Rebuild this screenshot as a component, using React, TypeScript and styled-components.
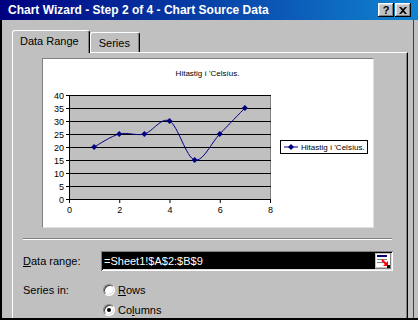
import styled, { createGlobalStyle } from "styled-components";

const GlobalStyle = createGlobalStyle`
  html, body {
    margin: 0;
    padding: 0;
    background: #c0c0c0;
  }
  body {
    font-family: "Liberation Sans", Arial, sans-serif;
    font-size: 11px;
    color: #000;
  }
`;

const Window = styled.div`
  width: 418px;
  height: 320px;
  box-sizing: border-box;
  display: flex;
  flex-direction: column;
  overflow: hidden;
  background: #c0c0c0;
  border-bottom: 2px solid #000;
`;

const TitleBar = styled.div`
  height: 20px;
  flex: none;
  display: flex;
  align-items: center;
  justify-content: space-between;
  padding: 0 7px 0 8px;
  background: linear-gradient(to right, #000080, #1084d0);
  color: #fff;
  font-weight: bold;
  font-size: 12px;
`;

const TitleButtons = styled.div`
  display: flex;
  gap: 1px;
`;

const TitleButton = styled.div`
  width: 16px;
  height: 14px;
  box-sizing: border-box;
  display: flex;
  align-items: center;
  justify-content: center;
  background: #c0c0c0;
  color: #000;
  font-size: 11px;
  font-weight: bold;
  box-shadow: inset -1px -1px #000, inset 1px 1px #fff, inset -2px -2px #808080,
    inset 2px 2px #dfdfdf;
`;

const Body = styled.div`
  flex: 1;
  min-height: 0;
  width: 414px;
  box-sizing: border-box;
  overflow: hidden;
  border-left: 2px solid #000;
  border-right: 1px solid #404040;
  padding: 10px 5px 0 10px;
`;

const TabRow = styled.div`
  display: flex;
  align-items: flex-end;
  height: 22px;
  position: relative;
  z-index: 1;
`;

const Tab = styled.div<{ $active?: boolean }>`
  box-sizing: border-box;
  height: ${({ $active }) => ($active ? 23 : 20)}px;
  margin-bottom: ${({ $active }) => ($active ? -1 : 0)}px;
  padding: ${({ $active }) => ($active ? "0 10px 2px 7px" : "0 9px 0 8px")};
  display: flex;
  align-items: center;
  background: #c0c0c0;
  border-top: 1px solid #fff;
  border-left: 1px solid #fff;
  border-right: 1px solid #000;
  border-radius: 3px 3px 0 0;
  box-shadow: inset -1px 0 #808080;
`;

const Panel = styled.div`
  box-sizing: border-box;
  width: 396px;
  height: 300px;
  border-top: 1px solid #fff;
  border-left: 1px solid #fff;
  border-right: 1px solid #000;
  box-shadow: inset -1px 0 #808080;
  padding: 5px 0 0 10px;
`;

const ChartFrame = styled.div`
  width: 332px;
  height: 170px;
  box-sizing: border-box;
  margin-left: 19px;
  background: #fff;
  border: 1px solid;
  border-color: #808080 #dfdfdf #dfdfdf #808080;
  svg {
    display: block;
  }
`;

const Separator = styled.div`
  width: 369px;
  margin-top: 10px;
  border-top: 1px solid #808080;
  border-bottom: 1px solid #fff;
`;

const FieldRow = styled.div<{ $gap: number }>`
  display: grid;
  grid-template-columns: 78px auto;
  align-items: start;
  margin-top: ${({ $gap }) => $gap}px;
`;

const Label = styled.span`
  line-height: 18px;
`;

const RangeField = styled.div`
  width: 292px;
  height: 20px;
  margin-top: -1px;
  box-sizing: border-box;
  padding: 2px;
  display: flex;
  background: #c0c0c0;
  box-shadow: inset 1px 1px #808080, inset -1px -1px #fff, inset 2px 2px #000,
    inset -2px -2px #dfdfdf;
`;

const RangeText = styled.div`
  flex: 1;
  background: #000;
  color: #fff;
  padding-left: 1px;
  font-size: 11px;
  line-height: 16px;
`;

const RadioList = styled.div`
  display: flex;
  flex-direction: column;
  gap: 2px;
`;

const RadioOption = styled.label`
  display: flex;
  align-items: center;
  height: 18px;
  gap: 3px;
  padding-left: 2px;
`;

const RadioCircle = styled.span<{ $checked?: boolean }>`
  width: 12px;
  height: 12px;
  box-sizing: border-box;
  border-radius: 50%;
  background: #fff;
  border: 1px solid;
  border-color: #808080 #fff #fff #808080;
  box-shadow: inset 1px 1px #404040, inset -1px -1px #dfdfdf;
  display: flex;
  align-items: center;
  justify-content: center;
  &::after {
    content: "";
    width: 4px;
    height: 4px;
    border-radius: 50%;
    background: ${({ $checked }) => ($checked ? "#000" : "transparent")};
  }
`;

const plot = { x0: 27, y0: 37, x1: 228, y1: 141 };
const sx = (v: number) => plot.x0 + (v / 8) * (plot.x1 - plot.x0);
const sy = (v: number) => plot.y1 - (v / 40) * (plot.y1 - plot.y0);
const data = [20, 25, 25, 30, 15, 25, 35];
const points = data.map((v, i) => [sx(i + 1), sy(v)]);

function smoothPath(p: number[][]) {
  let d = `M${p[0][0]},${p[0][1]}`;
  for (let i = 0; i < p.length - 1; i++) {
    const p0 = p[i - 1] ?? p[i];
    const p1 = p[i];
    const p2 = p[i + 1];
    const p3 = p[i + 2] ?? p2;
    const c1 = [p1[0] + (p2[0] - p0[0]) / 6, p1[1] + (p2[1] - p0[1]) / 6];
    const c2 = [p2[0] - (p3[0] - p1[0]) / 6, p2[1] - (p3[1] - p1[1]) / 6];
    d += ` C${c1[0]},${c1[1]} ${c2[0]},${c2[1]} ${p2[0]},${p2[1]}`;
  }
  return d;
}

const Marker = ({ x, y }: { x: number; y: number }) => (
  <polygon points={`${x},${y - 3} ${x + 3},${y} ${x},${y + 3} ${x - 3},${y}`} fill="#000080" />
);

function Chart() {
  const grid = [5, 10, 15, 20, 25, 30, 35, 40];
  const yLabels = [0, 5, 10, 15, 20, 25, 30, 35, 40];
  const xLabels = [0, 2, 4, 6, 8];
  return (
    <svg width={330} height={168} viewBox="1 1 330 168" fontFamily="Liberation Sans, Arial, sans-serif">
      <text x={165.5} y={18} fontSize={8} textAnchor="middle">
        Hitastig í 'Celsíus.
      </text>
      <rect x={plot.x0} y={plot.y0} width={plot.x1 - plot.x0} height={plot.y1 - plot.y0} fill="#c0c0c0" />
      <line x1={plot.x1 + 0.5} y1={plot.y0} x2={plot.x1 + 0.5} y2={plot.y1} stroke="#808080" />
      {grid.map((v) => (
        <line key={v} x1={plot.x0} y1={sy(v) + 0.5} x2={plot.x1 + 1} y2={sy(v) + 0.5} stroke="#000" />
      ))}
      {yLabels.map((v) => (
        <g key={v}>
          <line x1={plot.x0 - 3} y1={sy(v) + 0.5} x2={plot.x0} y2={sy(v) + 0.5} stroke="#000" />
          <text x={22} y={sy(v) + 3.5} fontSize={9} textAnchor="end">
            {v}
          </text>
        </g>
      ))}
      <line x1={plot.x0 + 0.5} y1={plot.y0} x2={plot.x0 + 0.5} y2={plot.y1 + 1} stroke="#000" />
      <line x1={plot.x0} y1={plot.y1 + 0.5} x2={plot.x1 + 1} y2={plot.y1 + 0.5} stroke="#000" />
      {xLabels.map((v) => (
        <g key={v}>
          <line x1={sx(v) + 0.5} y1={plot.y1} x2={sx(v) + 0.5} y2={plot.y1 + 4} stroke="#000" />
          <text x={sx(v) + 0.5} y={155} fontSize={9} textAnchor="middle">
            {v}
          </text>
        </g>
      ))}
      <path d={smoothPath(points)} fill="none" stroke="#000080" strokeWidth={1} />
      {points.map(([x, y], i) => (
        <Marker key={i} x={x} y={y} />
      ))}
      <rect x={238.5} y={82.5} width={87} height={13} fill="#fff" stroke="#000" />
      <line x1={242} y1={89} x2={256} y2={89} stroke="#000080" />
      <Marker x={249} y={89} />
      <text x={259} y={92} fontSize={8}>
        Hitastig í 'Celsíus.
      </text>
    </svg>
  );
}

function RefIcon() {
  return (
    <svg width={16} height={16} viewBox="0 0 16 16">
      <rect x={0} y={0} width={16} height={16} fill="#c0c0c0" />
      <rect x={1} y={1} width={14} height={13} fill="#fff" stroke="#808080" strokeWidth={0} />
      <rect x={2} y={2} width={10} height={2} fill="#000080" />
      <line x1={2} y1={6.5} x2={12} y2={6.5} stroke="#808080" />
      <line x1={2} y1={9.5} x2={9} y2={9.5} stroke="#808080" />
      <line x1={7} y1={7} x2={11} y2={11} stroke="#ff0000" strokeWidth={2} />
      <polygon points="13,13 13,8 8,13" fill="#ff0000" />
      <rect x={12} y={12} width={3} height={3} fill="#000" />
      <line x1={0} y1={15.5} x2={16} y2={15.5} stroke="#808080" />
      <line x1={15.5} y1={0} x2={15.5} y2={16} stroke="#808080" />
    </svg>
  );
}

export default function App() {
  return (
    <>
      <GlobalStyle />
      <Window>
        <TitleBar>
          <span>Chart Wizard - Step 2 of 4 - Chart Source Data</span>
          <TitleButtons>
            <TitleButton>?</TitleButton>
            <TitleButton>
              <svg width={8} height={7} viewBox="0 0 8 7">
                <path d="M0 0h2l2 2 2-2h2L5 3.5 8 7H6L4 5 2 7H0l3-3.5z" fill="#000" />
              </svg>
            </TitleButton>
          </TitleButtons>
        </TitleBar>
        <Body>
          <TabRow>
            <Tab $active>Data Range</Tab>
            <Tab>Series</Tab>
          </TabRow>
          <Panel>
            <ChartFrame>
              <Chart />
            </ChartFrame>
            <Separator />
            <FieldRow $gap={12}>
              <Label>
                <u>D</u>ata range:
              </Label>
              <RangeField>
                <RangeText>=Sheet1!$A$2:$B$9</RangeText>
                <RefIcon />
              </RangeField>
            </FieldRow>
            <FieldRow $gap={10}>
              <Label>Series in:</Label>
              <RadioList>
                <RadioOption>
                  <RadioCircle />
                  <span>
                    <u>R</u>ows
                  </span>
                </RadioOption>
                <RadioOption>
                  <RadioCircle $checked />
                  <span>
                    Co<u>l</u>umns
                  </span>
                </RadioOption>
              </RadioList>
            </FieldRow>
          </Panel>
        </Body>
      </Window>
    </>
  );
}
